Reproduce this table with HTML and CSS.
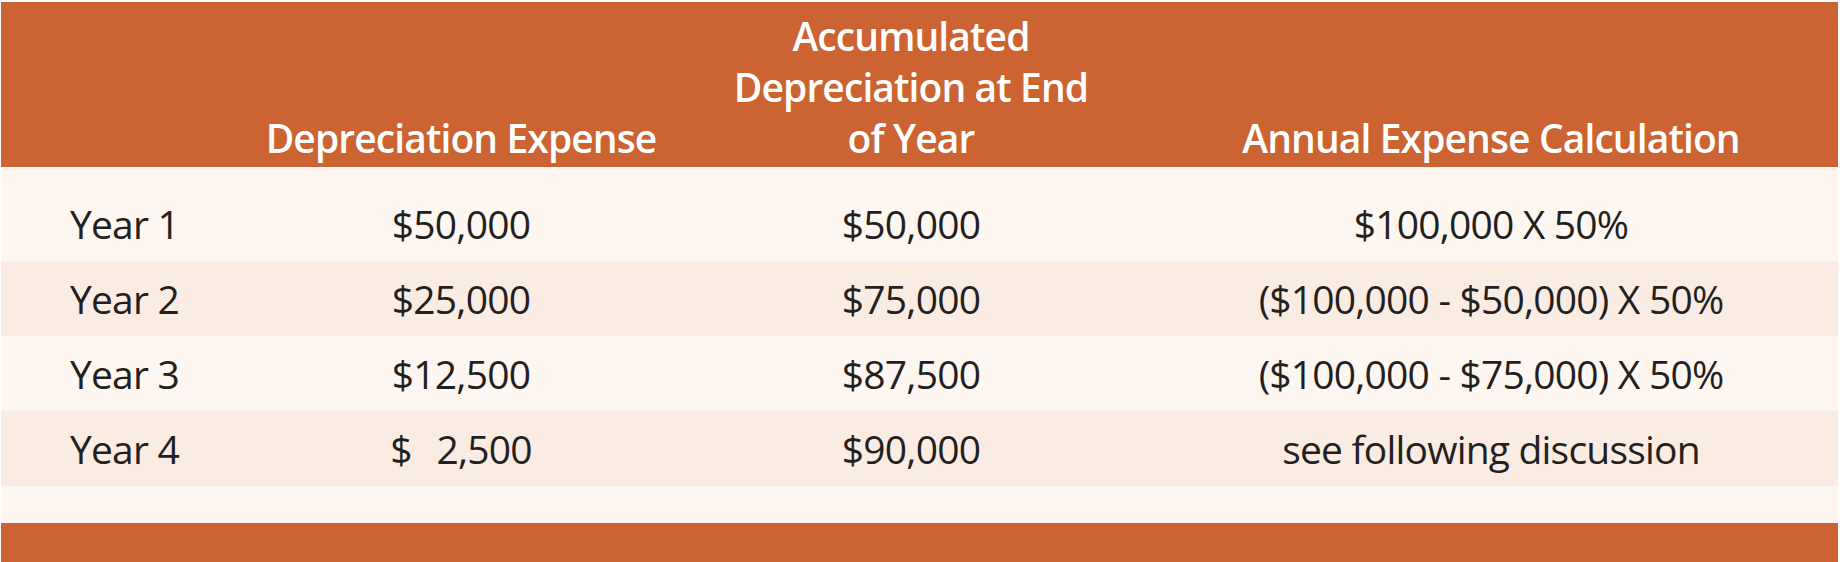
FILE: index.html
```html
<!DOCTYPE html>
<html lang="en">
<head>
<meta charset="utf-8">
<title>Depreciation Schedule</title>
<link rel="stylesheet" href="styles.css">
</head>
<body>
<div class="sheet">
  <div class="row head">
    <div class="cell c1"></div>
    <div class="cell c2">Depreciation Expense</div>
    <div class="cell c3">Accumulated<br>Depreciation at End<br>of Year</div>
    <div class="cell c4">Annual Expense Calculation</div>
  </div>
  <div class="body">
    <div class="row data odd">
      <div class="cell c1">Year 1</div>
      <div class="cell c2">$50,000</div>
      <div class="cell c3">$50,000</div>
      <div class="cell c4">$100,000 X 50%</div>
    </div>
    <div class="row data even">
      <div class="cell c1">Year 2</div>
      <div class="cell c2">$25,000</div>
      <div class="cell c3">$75,000</div>
      <div class="cell c4">($100,000 - $50,000) X 50%</div>
    </div>
    <div class="row data odd">
      <div class="cell c1">Year 3</div>
      <div class="cell c2">$12,500</div>
      <div class="cell c3">$87,500</div>
      <div class="cell c4">($100,000 - $75,000) X 50%</div>
    </div>
    <div class="row data even">
      <div class="cell c1">Year 4</div>
      <div class="cell c2">$&#8199;&#8202;2,500</div>
      <div class="cell c3">$90,000</div>
      <div class="cell c4">see following discussion</div>
    </div>
  </div>
  <div class="foot"></div>
</div>
</body>
</html>
```
FILE: styles.css
```css
html, body {
  margin: 0;
  padding: 0;
  background: #ffffff;
}

.sheet {
  width: 1837px;
  margin: 2px 2px 0 1px;
  font-family: "Open Sans", "Noto Sans", sans-serif;
  color: #231f20;
}

.row {
  display: grid;
  grid-template-columns: 239px 442px 458px 1fr;
}

.head {
  background: #cb6432;
  color: #ffffff;
  height: 165px;
  align-items: end;
  font-weight: 600;
  font-size: 39px;
  letter-spacing: -0.9px;
  line-height: 51px;
  padding-bottom: 4px;
  box-sizing: border-box;
}

.head .cell {
  text-align: center;
}

.body {
  background: #fef6f1;
  padding: 19px 0 37px;
}

.data {
  height: 75px;
  align-items: center;
  font-size: 39px;
  letter-spacing: -0.8px;
}

.data.even {
  background: #faece3;
}

.cell {
  white-space: nowrap;
}

.data .c1 {
  padding-left: 69px;
}

.data .c2,
.data .c3,
.data .c4 {
  text-align: center;
}

.c4 {
  padding-left: 4px;
}

.foot {
  background: #cb6432;
  height: 39px;
}
```
